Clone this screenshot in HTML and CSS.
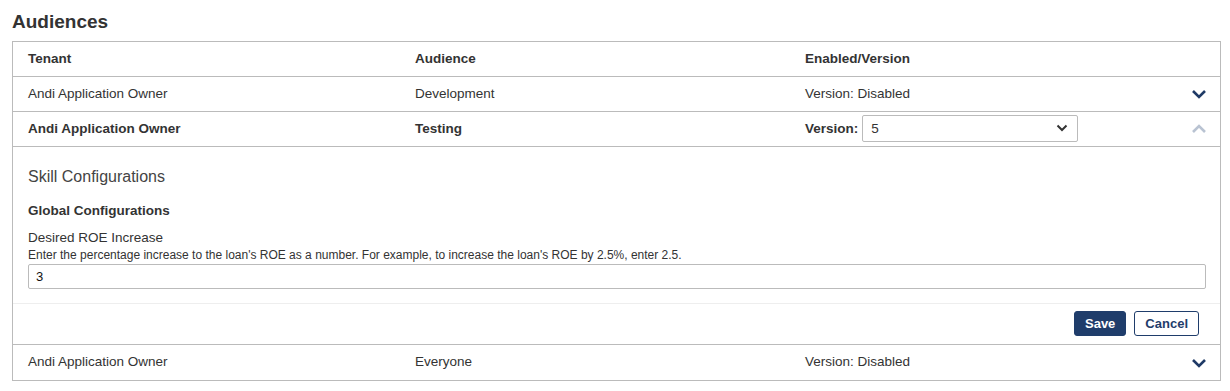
FILE: index.html
```html
<!DOCTYPE html>
<html lang="en">
<head>
    <meta charset="UTF-8">
    <meta name="viewport" content="width=device-width, initial-scale=1.0">
    <title>Audiences</title>
    <link rel="stylesheet" href="styles.css">
</head>
<body>
    <div id="wrapper">
        <h1>Audiences</h1>

        <div class="audiences">
            <div class="row head">
                <div>Tenant</div>
                <div>Audience</div>
                <div>Enabled/Version</div>
                <div></div>
            </div>

            <div class="row">
                <div>Andi Application Owner</div>
                <div>Development</div>
                <div>Version: Disabled</div>
                <div class="toggle">
                    <svg width="16" height="10" viewBox="0 0 16 10"><path d="M2 2l6 6 6-6" fill="none" stroke="#1f3a66" stroke-width="2.6"/></svg>
                </div>
            </div>

            <div class="row open">
                <div>Andi Application Owner</div>
                <div>Testing</div>
                <div class="version">
                    <span>Version:</span>
                    <div class="select">
                        <span>5</span>
                        <svg width="12" height="8" viewBox="0 0 12 8"><path d="M1.5 1.5l4.5 4.5 4.5-4.5" fill="none" stroke="#333" stroke-width="2"/></svg>
                    </div>
                </div>
                <div class="toggle">
                    <svg width="16" height="10" viewBox="0 0 16 10"><path d="M2 8l6-6 6 6" fill="none" stroke="#b9c3d2" stroke-width="2.6"/></svg>
                </div>
            </div>

            <div class="details">
                <h2>Skill Configurations</h2>
                <h3>Global Configurations</h3>
                <label>Desired ROE Increase</label>
                <div class="help">Enter the percentage increase to the loan's ROE as a number. For example, to increase the loan's ROE by 2.5%, enter 2.5.</div>
                <div class="field">3</div>
            </div>

            <div class="actions">
                <button class="btn save">Save</button>
                <button class="btn cancel">Cancel</button>
            </div>

            <div class="row last">
                <div>Andi Application Owner</div>
                <div>Everyone</div>
                <div>Version: Disabled</div>
                <div class="toggle">
                    <svg width="16" height="10" viewBox="0 0 16 10"><path d="M2 2l6 6 6-6" fill="none" stroke="#1f3a66" stroke-width="2.6"/></svg>
                </div>
            </div>
        </div>
    </div>
</body>
</html>
```

FILE: styles.css
```css
* {
    margin: 0;
    padding: 0;
    box-sizing: border-box;
}

body {
    font-family: "Liberation Sans", Arial, sans-serif;
    font-size: 13.5px;
    color: #333;
    background: #fff;
}

#wrapper {
    padding: 12px 9px 0 12px;
}

h1 {
    font-size: 19px;
    font-weight: bold;
    color: #333;
    line-height: 20px;
    margin-bottom: 9px;
}

.audiences {
    border: 1px solid #bbb;
}

.row {
    display: grid;
    grid-template-columns: 387px 390px 1fr 30px;
    align-items: center;
    height: 35px;
    padding: 0 13px 2px 15px;
    border-bottom: 1px solid #bbb;
}

.row.last {
    border-bottom: none;
}

.head,
.open {
    font-weight: bold;
}

.toggle {
    display: flex;
    justify-content: flex-end;
    padding-top: 2px;
}

.version {
    display: flex;
    align-items: center;
    gap: 4px;
}

.select {
    width: 216px;
    height: 27px;
    border: 1px solid #bbb;
    border-radius: 2px;
    display: flex;
    align-items: center;
    justify-content: space-between;
    padding: 0 9px 0 8px;
    font-weight: normal;
}

.details {
    padding: 20px 14px 14px 15px;
    border-bottom: 1px solid #eee;
}

h2 {
    font-size: 16px;
    font-weight: normal;
    color: #444;
    line-height: 20px;
    margin-bottom: 16px;
}

h3 {
    font-size: 13.5px;
    font-weight: bold;
    line-height: 16px;
    margin-bottom: 11px;
}

label {
    display: block;
    font-size: 13.5px;
    line-height: 16px;
    margin-bottom: 2px;
}

.help {
    font-size: 12px;
    line-height: 14px;
    margin-bottom: 2px;
}

.field {
    height: 25px;
    border: 1px solid #bbb;
    border-radius: 2px;
    padding: 0 7px;
    line-height: 23px;
    font-size: 13px;
    color: #111;
}

.actions {
    display: flex;
    justify-content: flex-end;
    gap: 8px;
    padding: 7px 21px 8px 0;
    border-bottom: 1px solid #bbb;
}

.btn {
    font-family: "Liberation Sans", Arial, sans-serif;
    font-size: 13px;
    font-weight: bold;
    height: 25px;
    border-radius: 3px;
    padding: 0 10px;
    cursor: pointer;
}

.save {
    background: #1f3d6b;
    border: 1px solid #1f3d6b;
    color: #fff;
}

.cancel {
    background: #fff;
    border: 1px solid #1f3d6b;
    color: #1f3d6b;
}
```
